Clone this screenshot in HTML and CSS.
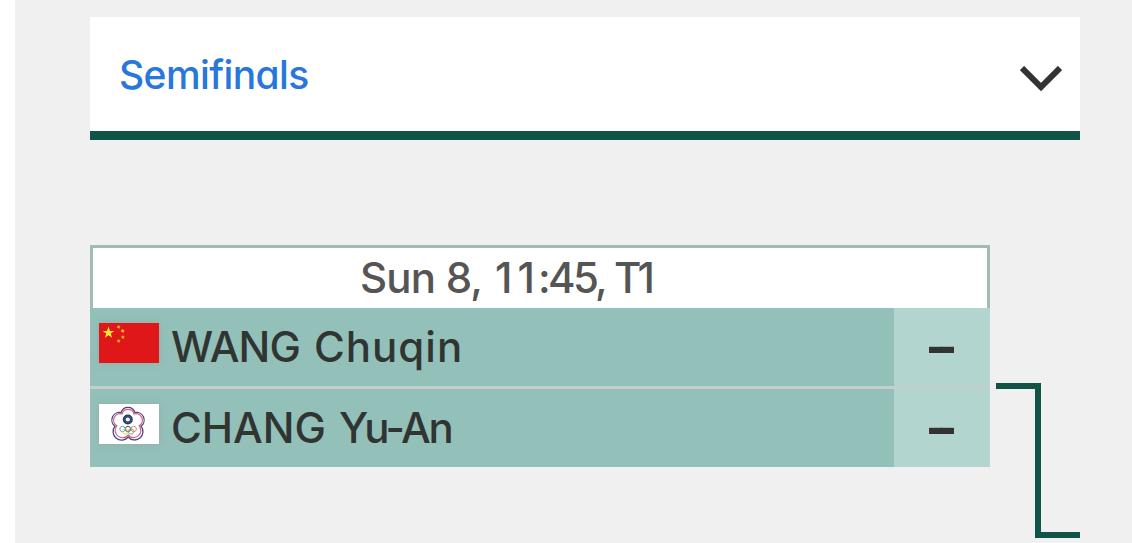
FILE: index.html
```html
<!DOCTYPE html>
<html lang="en">
<head>
<meta charset="utf-8">
<title>Semifinals</title>
<link rel="stylesheet" href="styles.css">
</head>
<body>
  <div class="wrapper">
    <div class="round-select">
      <span class="round-name">Semifinals</span>
      <svg class="chevron" width="42" height="26" viewBox="0 0 42 26"><path d="M2 2L21 21L40 2" fill="none" stroke="#333" stroke-width="6"/></svg>
    </div>
    <div class="bracket">
      <div class="match">
        <div class="match-time"><span class="day">Sun 8,</span><span class="hour">11</span><span class="minute">:45,</span><span class="table">T1</span></div>
        <div class="player">
          <div class="player-info">
            <svg class="flag" width="60" height="40" viewBox="0 0 60 40">
              <rect width="60" height="40" fill="#df1718"/>
              <path fill="#ffe43a" d="M9.5 3.6L11 8H15.3L11.8 10.5L13.1 14.8L9.5 12.2L5.9 14.8L7.2 10.5L3.7 8H8Z"/>
              <g fill="#ffca25">
                <path d="M20 2L20.4 3.3L21.7 3.8L20.5 4.5L20.2 6L19.3 4.8L17.8 4.9L18.7 3.8L18.2 2.5L19.4 2.9Z"/>
                <path d="M24 6L24.5 7.4L26 7.8L24.7 8.5L24.5 10L23.4 8.9L22 9L22.7 7.8L22.1 6.5L23.4 6.8Z"/>
                <path d="M24 12L24.5 13.4L26 13.6L24.8 14.5L25.1 16L23.9 15.1L22.6 15.8L23 14.4L22 13.3H23.5Z"/>
                <path d="M20 16L20.4 17.3L21.7 17.8L20.5 18.5L20.2 20L19.3 18.8L17.8 18.9L18.7 17.8L18.2 16.5L19.4 16.9Z"/>
              </g>
            </svg>
            <span class="player-name"><span class="wang">WANG</span><span class="chuqin">Chuqin</span></span>
          </div>
          <div class="score">--</div>
        </div>
        <div class="player">
          <div class="player-info">
            <svg class="flag" width="60" height="40" viewBox="0 0 60 40">
              <rect width="60" height="40" fill="#fff"/>
              <g fill="none">
                <path d="M22 8.600A7.300 7.300 0 0 1 36 8.600A7.600 7.600 0 0 1 42 22.200A7.300 7.300 0 0 1 29.200 33A7.300 7.300 0 0 1 16 22.200A7.600 7.600 0 0 1 22 8.600Z" stroke="#4a477f" stroke-width="1.300"/>
                <path d="M23 10A6.200 6.200 0 0 1 35 10A6.500 6.500 0 0 1 40.200 21.800A6.500 6.500 0 0 1 29.200 31A6.500 6.500 0 0 1 17.800 21.800A6.500 6.500 0 0 1 23 10Z" stroke="#d0607c" stroke-width="1.200"/>
                <circle cx="23.500" cy="25" r="2.700" stroke="#6e9fbd"/>
                <circle cx="29" cy="25" r="2.700" stroke="#555"/>
                <circle cx="34.700" cy="25" r="2.700" stroke="#d48b78"/>
                <circle cx="26.300" cy="27.500" r="2.700" stroke="#e7d777"/>
                <circle cx="32" cy="27.500" r="2.700" stroke="#82af87"/>
              </g>
              <circle cx="28.800" cy="15.500" r="5" fill="#233568"/>
              <circle cx="28.800" cy="15.500" r="3.300" fill="none" stroke="#7891ad" stroke-width=".8" stroke-dasharray="1 1"/>
              <circle cx="28.800" cy="15.500" r="2.100" fill="#f5f8fc"/>
            </svg>
            <span class="player-name"><span class="chang">CHANG</span><span class="yuan">Yu-An</span></span>
          </div>
          <div class="score">--</div>
        </div>
      </div>
      <svg class="connector" width="84" height="155" viewBox="0 0 84 155"><path d="M0 3H42V152H84" fill="none" stroke="#115346" stroke-width="6"/></svg>
    </div>
  </div>
</body>
</html>
```
FILE: styles.css
```css
*{
  box-sizing: border-box;
}

body{
  margin: 0;
  background-color: #fff;
  font-family: Inter, "Liberation Sans", sans-serif;
  font-weight: 500;
  font-feature-settings: "cv11" 1, "calt" 0;
  overflow: hidden;
}

.wrapper{
  margin-left: 15px;
  height: 543px;
  padding: 17px 52px 0 75px;
  background-color: #f0f0f0;
}

.round-select{
  display: flex;
  justify-content: space-between;
  align-items: center;
  height: 123px;
  padding: 0 18px 0 29px;
  background-color: #fff;
  border-bottom: 9px solid #115346;
}

.round-name{
  color: #2878dc;
  font-size: 39px;
  line-height: 48px;
  letter-spacing: -0.6px;
  padding-top: 2px;
}

.chevron{
  margin-top: 10px;
}

.bracket{
  display: flex;
  align-items: flex-start;
  margin-top: 105px;
}

.match{
  width: 900px;
}

.match-time{
  display: flex;
  height: 63px;
  padding-left: 267px;
  border: 3px solid #a3bab7;
  border-bottom: none;
  background-color: #fff;
  color: #555;
  font-size: 42px;
  line-height: 60px;
  white-space: nowrap;
}

.day{
  width: 135px;
  letter-spacing: -0.8px;
}

.hour{
  width: 43px;
  letter-spacing: 5px;
}

.minute{
  width: 76px;
  letter-spacing: -2.7px;
}

.table{
  letter-spacing: -4px;
}

.player{
  display: flex;
  height: 78px;
}

.player + .player{
  height: 81px;
  border-top: 3px solid #c4cecc;
}

.player-info{
  display: flex;
  align-items: flex-start;
  width: 804px;
  padding-left: 9px;
  background-color: #93c1ba;
}

.flag{
  margin-top: 15px;
  box-shadow: 0 0 6px rgba(150, 145, 140, 0.5);
}

.player-name{
  display: flex;
  margin-left: 12px;
  color: #303532;
  font-size: 42px;
  line-height: 77px;
  white-space: nowrap;
}

.wang{
  width: 143px;
  letter-spacing: -0.9px;
}

.chuqin{
  letter-spacing: 1px;
}

.chang{
  width: 168px;
}

.yuan{
  letter-spacing: -2.4px;
}

.score{
  width: 96px;
  background-color: #b2d5cf;
  color: #333;
  font-family: "Liberation Sans", sans-serif;
  font-size: 52px;
  font-weight: bold;
  line-height: 74px;
  letter-spacing: -5.5px;
  padding-left: 33px;
}

.connector{
  margin: 138px 0 0 6px;
}
```
